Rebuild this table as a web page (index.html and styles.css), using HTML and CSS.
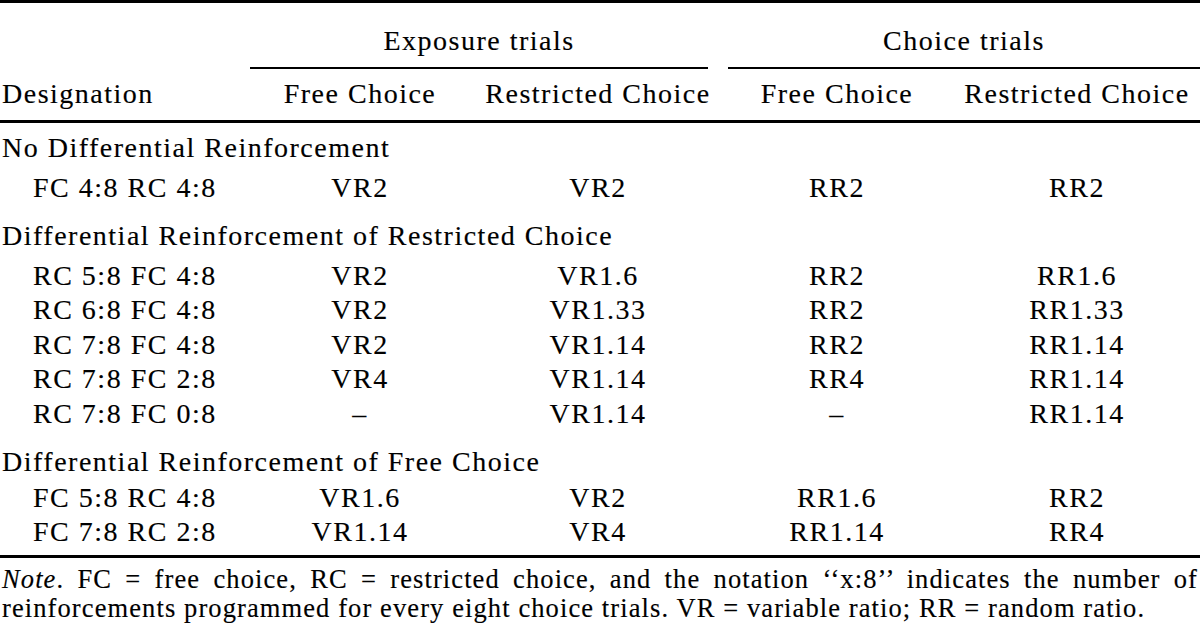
FILE: index.html
```html
<!DOCTYPE html>
<html>
<head>
<meta charset="utf-8">
<link rel="stylesheet" href="styles.css">
</head>
<body>
<div class="page">
  <table class="tbl">
    <colgroup>
      <col class="c1"><col class="c2"><col class="c3"><col class="c4"><col class="c5">
    </colgroup>
    <thead>
      <tr class="spanrow">
        <th></th>
        <th colspan="2"><div class="span exp">Exposure trials</div></th>
        <th colspan="2"><div class="span cho">Choice trials</div></th>
      </tr>
      <tr class="headrow">
        <th class="first">Designation</th>
        <th>Free Choice</th>
        <th>Restricted Choice</th>
        <th>Free Choice</th>
        <th class="last">Restricted Choice</th>
      </tr>
    </thead>
    <tbody>
      <tr class="group g1"><td colspan="5">No Differential Reinforcement</td></tr>
      <tr class="row after"><td class="first">FC 4:8 RC 4:8</td><td>VR2</td><td>VR2</td><td>RR2</td><td class="last">RR2</td></tr>
      <tr class="group"><td colspan="5">Differential Reinforcement of Restricted Choice</td></tr>
      <tr class="row after"><td class="first">RC 5:8 FC 4:8</td><td>VR2</td><td>VR1.6</td><td>RR2</td><td class="last">RR1.6</td></tr>
      <tr class="row"><td class="first">RC 6:8 FC 4:8</td><td>VR2</td><td>VR1.33</td><td>RR2</td><td class="last">RR1.33</td></tr>
      <tr class="row"><td class="first">RC 7:8 FC 4:8</td><td>VR2</td><td>VR1.14</td><td>RR2</td><td class="last">RR1.14</td></tr>
      <tr class="row"><td class="first">RC 7:8 FC 2:8</td><td>VR4</td><td>VR1.14</td><td>RR4</td><td class="last">RR1.14</td></tr>
      <tr class="row"><td class="first">RC 7:8 FC 0:8</td><td>–</td><td>VR1.14</td><td>–</td><td class="last">RR1.14</td></tr>
      <tr class="group g3"><td colspan="5">Differential Reinforcement of Free Choice</td></tr>
      <tr class="row after2"><td class="first">FC 5:8 RC 4:8</td><td>VR1.6</td><td>VR2</td><td>RR1.6</td><td class="last">RR2</td></tr>
      <tr class="row final"><td class="first">FC 7:8 RC 2:8</td><td>VR1.14</td><td>VR4</td><td>RR1.14</td><td class="last">RR4</td></tr>
    </tbody>
  </table>
  <div class="note">
    <div class="line l1"><i>Note</i>. FC = free choice, RC = restricted choice, and the notation ‘‘x:8’’ indicates the number of</div>
    <div class="line l2">reinforcements programmed for every eight choice trials. VR = variable ratio; RR = random ratio.</div>
  </div>
</div>
</body>
</html>
```
FILE: styles.css
```css
html, body {
  margin: 0;
  padding: 0;
  background: #fff;
}
body {
  font-family: "Liberation Serif", "Times New Roman", Tinos, Times, serif;
  color: #000;
  -webkit-text-stroke: 0.15px #000;
}
.page {
  width: 1200px;
}
.tbl {
  width: 1200px;
  table-layout: fixed;
  border-collapse: separate;
  border-spacing: 0;
  border-top: 3px solid #000;
  font-size: 28px;
  letter-spacing: 1.5px;
}
.c1 { width: 250px; }
.c2 { width: 220px; }
.c3 { width: 256px; }
.c4 { width: 222px; }
.c5 { width: 252px; }
th, td {
  padding: 0;
  font-weight: normal;
  text-align: center;
  white-space: nowrap;
}
.spanrow th {
  vertical-align: bottom;
}
.span {
  padding-top: 21px;
  padding-bottom: 9px;
  line-height: 34px;
  border-bottom: 2px solid #000;
}
.span.exp { margin-right: 18px; }
.span.cho { margin-left: 2px; }
.headrow th {
  line-height: 34px;
  padding-top: 8px;
  padding-bottom: 9px;
  border-bottom: 3px solid #000;
}
.headrow th.first, .row td.first, .group td {
  text-align: left;
}
.headrow th.first { padding-left: 2px; }
.row td.first { padding-left: 33px; }
.headrow th.last, .row td.last { padding-left: 6px; }
.group td {
  line-height: 34px;
  padding-top: 14px;
  padding-left: 2px;
}
.group.g1 td { padding-top: 8px; }
.row td {
  line-height: 34.5px;
}
.row.after td {
  line-height: 34px;
  padding-top: 6px;
}
.row.after2 td {
  line-height: 34px;
  padding-top: 2px;
}
.row.final td {
  padding-bottom: 5.5px;
  border-bottom: 3px solid #000;
}
.note {
  margin-top: 7px;
  font-size: 26.5px;
  line-height: 29px;
  letter-spacing: 1.1px;
  padding: 0 2px;
}
.line { white-space: nowrap; }
.l1 {
  white-space: normal;
  text-align: justify;
  text-align-last: justify;
}
```
